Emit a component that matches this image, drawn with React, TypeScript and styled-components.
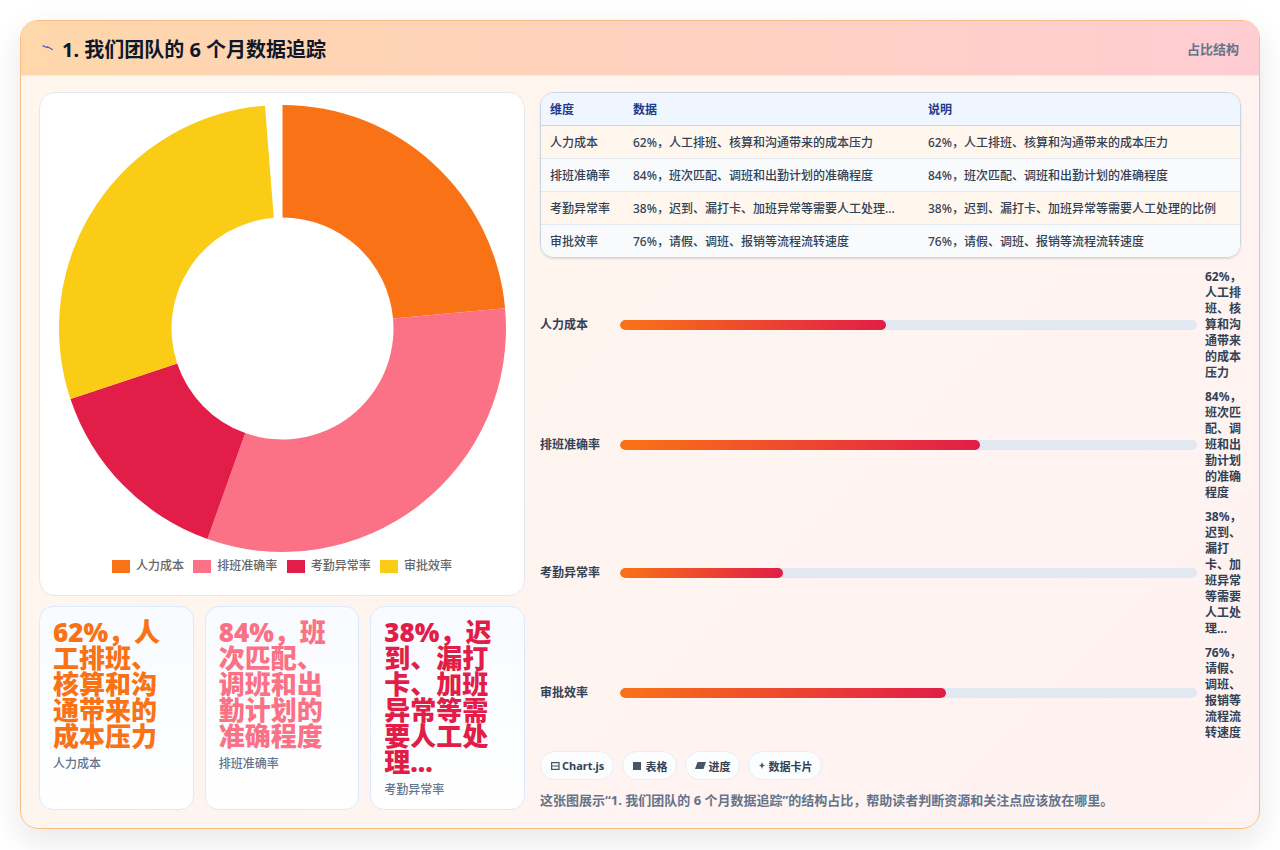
import styled, { createGlobalStyle } from 'styled-components';

const GlobalStyle = createGlobalStyle`
  html, body {
    margin: 0;
    padding: 0;
    background: #fff;
  }
  body {
    font-family: "Noto Sans", "Noto Sans CJK SC", sans-serif;
    color: #1f2937;
  }
`;

const Page = styled.div`
  width: 1280px;
  height: 850px;
  box-sizing: border-box;
  padding: 20px 20px 21px;
  overflow: hidden;
`;

const Card = styled.section`
  height: 100%;
  box-sizing: border-box;
  display: flex;
  flex-direction: column;
  border: 1px solid #f9bd85;
  border-radius: 18px;
  overflow: hidden;
  background: linear-gradient(135deg, #fff7ed, #fef2f2);
  box-shadow: 0 12px 32px rgba(15, 23, 42, 0.1);
`;

const Header = styled.header`
  height: 54px;
  flex: none;
  display: flex;
  align-items: center;
  justify-content: space-between;
  padding: 0 20px;
  background: linear-gradient(90deg, #fed7aa, #fecdd3);
  border-bottom: 1px solid #ffe4d6;
`;

const Title = styled.h1`
  margin: 0;
  display: flex;
  align-items: center;
  gap: 9px;
  font-size: 20px;
  font-weight: 700;
  color: #0f172a;
`;

const Kind = styled.span`
  font-size: 13px;
  font-weight: 700;
  color: #64748b;
`;

const Body = styled.div`
  flex: 1;
  min-height: 0;
  display: grid;
  grid-template-columns: 486px 1fr;
  gap: 15px;
  padding: 16px 18px 18px;
`;

const Column = styled.div`
  min-width: 0;
  display: flex;
  flex-direction: column;
  gap: 10px;
`;

const ChartPanel = styled.div`
  flex: 1;
  min-height: 0;
  display: flex;
  flex-direction: column;
  align-items: center;
  padding: 5px 10px;
  background: #fff;
  border: 1px solid #e2e8f0;
  border-radius: 16px;
`;

const Legend = styled.div`
  display: flex;
  align-items: center;
  justify-content: center;
  gap: 9.4px;
`;

const LegendItem = styled.span`
  display: flex;
  align-items: center;
  gap: 6px;
  font-size: 12px;
  line-height: 16px;
  font-weight: 500;
  color: #666;
`;

const Swatch = styled.i<{ $color: string }>`
  width: 18px;
  height: 13px;
  background: ${(p) => p.$color};
`;

const Stats = styled.div`
  display: grid;
  grid-template-columns: repeat(3, 1fr);
  gap: 11px;
`;

const Stat = styled.div`
  padding: 12px 13px 11px;
  background: linear-gradient(180deg, #f8fbff, #fff);
  border: 1px solid #dbeafe;
  border-radius: 14px;
`;

const StatValue = styled.div<{ $color: string }>`
  font-size: 26px;
  line-height: 26px;
  font-weight: 900;
  color: ${(p) => p.$color};
`;

const StatLabel = styled.div`
  margin-top: 7px;
  font-size: 12px;
  line-height: 16px;
  font-weight: 500;
  color: #64748b;
`;

const TableWrap = styled.div`
  margin-bottom: 1px;
  border: 1px solid #cbd5e1;
  border-radius: 14px;
  overflow: hidden;
  box-shadow: 0 1px 2px rgba(15, 23, 42, 0.12);
`;

const Table = styled.table`
  width: 100%;
  border-collapse: collapse;
  table-layout: fixed;
  font-size: 12px;
`;

const Th = styled.th<{ $width?: number }>`
  box-sizing: border-box;
  width: ${(p) => (p.$width ? `${p.$width}px` : 'auto')};
  height: 32px;
  padding: 0 9px;
  text-align: left;
  font-weight: 700;
  color: #1e3a8a;
  background: #eff6ff;
  border-bottom: 1px solid #cbd5e1;
`;

const Tr = styled.tr`
  background: #fff7ed;
  &:nth-child(even) {
    background: #f8fafc;
  }
  &:not(:last-child) td {
    border-bottom: 1px solid #e2e8f0;
  }
`;

const Td = styled.td`
  height: 33px;
  box-sizing: border-box;
  padding: 0 9px;
  font-weight: 500;
  color: #334155;
  white-space: nowrap;
`;

const BarRows = styled.div`
  flex: 1;
  display: flex;
  flex-direction: column;
  gap: 8px;
`;

const BarRow = styled.div`
  display: grid;
  grid-template-columns: 72px 1fr 36px;
  gap: 8px;
  align-items: center;
  font-size: 12px;
  line-height: 16px;
  font-weight: 700;
  color: #334155;
`;

const Track = styled.div`
  height: 10px;
  border-radius: 999px;
  background: #e2e8f0;
  overflow: hidden;
`;

const Fill = styled.div`
  height: 100%;
  border-radius: 999px;
  background: linear-gradient(90deg, #f97316, #e11d48);
`;

const Chips = styled.div`
  display: flex;
  gap: 8px;
`;

const Chip = styled.span`
  display: flex;
  align-items: center;
  gap: 2px;
  height: 29px;
  box-sizing: border-box;
  padding: 0 9px;
  border: 1px solid #e8edf3;
  border-radius: 999px;
  background: #fbfdff;
  font-size: 11px;
  font-weight: 700;
  color: #334155;
`;

const Note = styled.p`
  margin: 0;
  font-size: 13px;
  line-height: 20px;
  font-weight: 700;
  color: #64748b;
`;

type Metric = {
  name: string;
  value: number;
  text: string;
  short: string;
  color: string;
};

const metrics: Metric[] = [
  { name: '人力成本', value: 62, text: '62%，人工排班、核算和沟通带来的成本压力', short: '62%，人工排班、核算和沟通带来的成本压力', color: '#f97316' },
  { name: '排班准确率', value: 84, text: '84%，班次匹配、调班和出勤计划的准确程度', short: '84%，班次匹配、调班和出勤计划的准确程度', color: '#fb7185' },
  { name: '考勤异常率', value: 38, text: '38%，迟到、漏打卡、加班异常等需要人工处理的比例', short: '38%，迟到、漏打卡、加班异常等需要人工处理...', color: '#e11d48' },
  { name: '审批效率', value: 76, text: '76%，请假、调班、报销等流程流转速度', short: '76%，请假、调班、报销等流程流转速度', color: '#facc15' },
];

const total = metrics.reduce((sum, m) => sum + m.value, 0);

const slicePath = (from: number, to: number) => {
  const c = 230.5;
  const outer = 223.5;
  const inner = 111;
  const pt = (r: number, deg: number) => {
    const a = ((deg - 90) * Math.PI) / 180;
    return `${(c + r * Math.cos(a)).toFixed(2)} ${(c + r * Math.sin(a)).toFixed(2)}`;
  };
  const large = to - from > 180 ? 1 : 0;
  return `M${pt(outer, from)} A${outer} ${outer} 0 ${large} 1 ${pt(outer, to)} L${pt(inner, to)} A${inner} ${inner} 0 ${large} 0 ${pt(inner, from)} Z`;
};

const Doughnut = () => {
  let angle = 0;
  return (
    <svg width="460" height="460" viewBox="0 0 460 460">
      {metrics.map((m) => {
        const sweep = (m.value / total) * 355.5;
        const d = slicePath(angle, angle + sweep);
        angle += sweep;
        return <path key={m.name} d={d} fill={m.color} />;
      })}
    </svg>
  );
};

const BoltIcon = () => (
  <svg width="12" height="8" viewBox="0 0 12 8">
    <path d="M1.5 1.6 L6 3.6 L6.6 2.8 L11.8 5.8" fill="none" stroke="#4d5bd6" strokeWidth="1.2" />
  </svg>
);

const BoardIcon = () => (
  <svg width="10" height="8" viewBox="0 0 10 8">
    <path d="M1.6 .6h7.4v6.8H1.6z M1.6 4h7.4" fill="none" stroke="#475569" strokeWidth="1.2" />
  </svg>
);

const SquareIcon = () => (
  <svg width="11" height="8" viewBox="0 0 11 8">
    <rect x="1" width="8" height="8" fill="#475569" />
  </svg>
);

const SlantIcon = () => (
  <svg width="11" height="7" viewBox="0 0 11 7">
    <path d="M2.5 0H11L8.5 7H0z" fill="#475569" />
  </svg>
);

const SparkIcon = () => (
  <svg width="8" height="7" viewBox="0 0 8 7">
    <path d="M4 0 L4.9 2.6 L7 3.5 L4.9 4.4 L4 7 L3.1 4.4 L1 3.5 L3.1 2.6z" fill="#475569" />
  </svg>
);

const App = () => {
  return (
    <Page>
      <GlobalStyle />
      <Card>
        <Header>
          <Title>
            <BoltIcon />
            1. 我们团队的 6 个月数据追踪
          </Title>
          <Kind>占比结构</Kind>
        </Header>
        <Body>
          <Column>
            <ChartPanel>
              <Doughnut />
              <Legend>
                {metrics.map((m) => (
                  <LegendItem key={m.name}>
                    <Swatch $color={m.color} />
                    {m.name}
                  </LegendItem>
                ))}
              </Legend>
            </ChartPanel>
            <Stats>
              {metrics.slice(0, 3).map((m) => (
                <Stat key={m.name}>
                  <StatValue $color={m.color}>{m.short}</StatValue>
                  <StatLabel>{m.name}</StatLabel>
                </Stat>
              ))}
            </Stats>
          </Column>
          <Column>
            <TableWrap>
              <Table>
                <thead>
                  <tr>
                    <Th $width={83}>维度</Th>
                    <Th $width={295}>数据</Th>
                    <Th>说明</Th>
                  </tr>
                </thead>
                <tbody>
                  {metrics.map((m) => (
                    <Tr key={m.name}>
                      <Td>{m.name}</Td>
                      <Td>{m.short}</Td>
                      <Td>{m.text}</Td>
                    </Tr>
                  ))}
                </tbody>
              </Table>
            </TableWrap>
            <BarRows>
              {metrics.map((m) => (
                <BarRow key={m.name}>
                  <span>{m.name}</span>
                  <Track>
                    <Fill style={{ width: `${(m.value / total) * 193.3}%` }} />
                  </Track>
                  <span>{m.short}</span>
                </BarRow>
              ))}
            </BarRows>
            <Chips>
              <Chip><BoardIcon /> Chart.js</Chip>
              <Chip><SquareIcon /> 表格</Chip>
              <Chip><SlantIcon /> 进度</Chip>
              <Chip><SparkIcon /> 数据卡片</Chip>
            </Chips>
            <Note>这张图展示“1. 我们团队的 6 个月数据追踪”的结构占比，帮助读者判断资源和关注点应该放在哪里。</Note>
          </Column>
        </Body>
      </Card>
    </Page>
  );
};

export default App;
